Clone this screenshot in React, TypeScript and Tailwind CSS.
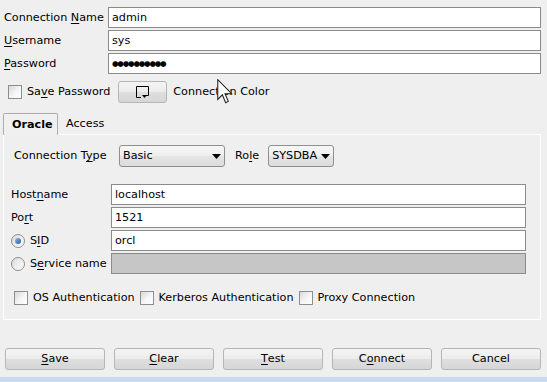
import React from "react";

const font = { fontFamily: '"DejaVu Sans", Verdana, sans-serif' };

function U({ children }: { children: React.ReactNode }) {
  return <span className="underline underline-offset-[2px] decoration-1">{children}</span>;
}

function Field({ value, disabled, password }: { value?: string; disabled?: boolean; password?: boolean }) {
  return (
    <div
      className={
        "h-[21px] border border-[#8b8b8b] flex items-center pl-[3px] text-black " +
        (disabled ? "bg-[#c6c6c6]" : "bg-white") +
        (password ? " text-[7.5px] tracking-[-1.2px]" : " text-[11.2px]")
      }
    >
      {value}
    </div>
  );
}

function Checkbox() {
  return (
    <div className="w-[14px] h-[14px] border border-[#8e8e8e] bg-gradient-to-br from-[#d8d8d8] via-[#f4f4f4] to-white shrink-0" />
  );
}

function Radio({ checked }: { checked?: boolean }) {
  return (
    <div className="w-[14px] h-[14px] rounded-full border border-[#8e8e8e] bg-gradient-to-br from-[#dcdcdc] to-white flex items-center justify-center shrink-0">
      {checked && (
        <div className="w-[6px] h-[6px] rounded-full bg-gradient-to-br from-[#8fb6e6] to-[#1d5bb0]" />
      )}
    </div>
  );
}

function Btn({ children, className = "" }: { children: React.ReactNode; className?: string }) {
  return (
    <div
      className={
        "h-[22px] rounded-[3px] border border-[#b5b5b5] flex items-center justify-center text-black bg-[linear-gradient(#f4f4f4_0%,#ececec_48%,#dedede_52%,#d6d6d6_100%)] " +
        className
      }
    >
      {children}
    </div>
  );
}

function Combo({ value, className = "" }: { value: string; className?: string }) {
  return (
    <div
      className={
        "h-[22px] rounded-[3px] border border-[#8f8f8f] flex items-center justify-between gap-[3px] pl-[3px] pr-[3px] text-black bg-[linear-gradient(#f6f6f6_0%,#efefef_48%,#e4e4e4_52%,#dcdcdc_100%)] " +
        className
      }
    >
      <span>{value}</span>
      <svg width="9" height="5" viewBox="0 0 9 5" className="shrink-0">
        <path d="M0 0 H9 L4.5 5 Z" fill="#000" />
      </svg>
    </div>
  );
}

export default function App() {
  return (
    <div
      className="w-[547px] h-[382px] bg-[#efefef] relative overflow-hidden flex flex-col text-[11.2px] text-black leading-none"
      style={font}
    >
      {/* top fields */}
      <div className="pt-[7px] pl-[4px] pr-[6px] grid grid-cols-[104px_1fr] gap-y-[2px] items-center">
        <div>
          Connection <U>N</U>ame
        </div>
        <Field value="admin" />
        <div>
          <U>U</U>sername
        </div>
        <Field value="sys" />
        <div>
          <U>P</U>assword
        </div>
        <Field value="●●●●●●●●●●" password />
      </div>

      {/* save password row */}
      <div className="mt-[7px] h-[22px] flex items-center pl-[8px]">
        <Checkbox />
        <span className="ml-[5px]">
          Sa<U>v</U>e Password
        </span>
        <Btn className="ml-[8px] w-[49px]">
          <svg width="16" height="14" viewBox="0 0 16 14">
            <path d="M1.5 1.5 H13.5 V10.5 H9" fill="none" stroke="#000" />
            <path d="M1.5 1.5 V12.5 H6" fill="none" stroke="#000" />
            <path d="M7 10 H12 L9.5 13 Z" fill="#000" />
          </svg>
        </Btn>
        <span className="ml-[6px]">Connection Color</span>
      </div>

      {/* tabs */}
      <div className="mt-[9px] ml-[3px] mr-[6px] flex flex-col">
        <div className="flex items-end h-[22px]">
          <div className="h-[22px] w-[55px] border border-b-0 border-[#adadad] rounded-t-[2px] bg-[#f0f0f0] flex items-center pl-[8px] font-bold relative z-10 -mb-px">
            Oracle
          </div>
          <div className="h-[20px] flex items-center pl-[8px]">Access</div>
        </div>
        <div className="h-[186px] border border-white flex flex-col pl-[7px] pr-[14px]">
          {/* connection type row */}
          <div className="mt-[10px] h-[22px] flex items-center pl-[3px]">
            <span className="w-[105px]">
              Connection T<U>y</U>pe
            </span>
            <Combo value="Basic" className="w-[106px]" />
            <span className="ml-[10px]">
              Ro<U>l</U>e
            </span>
            <Combo value="SYSDBA" className="ml-[9px] w-[66px]" />
          </div>

          <div className="mt-[17px] grid grid-cols-[100px_1fr] gap-y-[2px] items-center">
            <div>
              Host<U>n</U>ame
            </div>
            <Field value="localhost" />
            <div>
              Po<U>r</U>t
            </div>
            <Field value="1521" />
            <div className="flex items-center gap-[5px]">
              <Radio checked />
              <span>
                S<U>I</U>D
              </span>
            </div>
            <Field value="orcl" />
            <div className="flex items-center gap-[5px]">
              <Radio />
              <span>
                S<U>e</U>rvice name
              </span>
            </div>
            <Field disabled />
          </div>

          <div className="mt-[17px] flex items-center pl-[3px]">
            <Checkbox />
            <span className="ml-[5px]">OS Authentication</span>
            <div className="ml-[5px]">
              <Checkbox />
            </div>
            <span className="ml-[5px]">Kerberos Authentication</span>
            <div className="ml-[5px]">
              <Checkbox />
            </div>
            <span className="ml-[5px]">Proxy Connection</span>
          </div>
        </div>
      </div>

      {/* buttons */}
      <div className="mt-[28px] px-[5px] flex gap-[9px]">
        <Btn className="w-[100px]">
          <U>S</U>ave
        </Btn>
        <Btn className="w-[100px]">
          <U>C</U>lear
        </Btn>
        <Btn className="w-[100px]">
          <U>T</U>est
        </Btn>
        <Btn className="w-[100px]">
          C<U>o</U>nnect
        </Btn>
        <Btn className="w-[100px]">Cancel</Btn>
      </div>

      <div className="mt-auto h-[5px] bg-[#c6dbef]" />

      {/* mouse cursor overlay */}
      <svg
        className="absolute left-[217px] top-[79px]"
        width="16"
        height="25"
        viewBox="0 0 12 19"
      >
        <path
          d="M0.5 0.5 L0.5 15.5 L4 12 L6.5 18 L8.5 17 L6 11.2 L11 11.2 Z"
          fill="#fff"
          stroke="#222"
          strokeWidth="0.8"
        />
      </svg>
    </div>
  );
}
